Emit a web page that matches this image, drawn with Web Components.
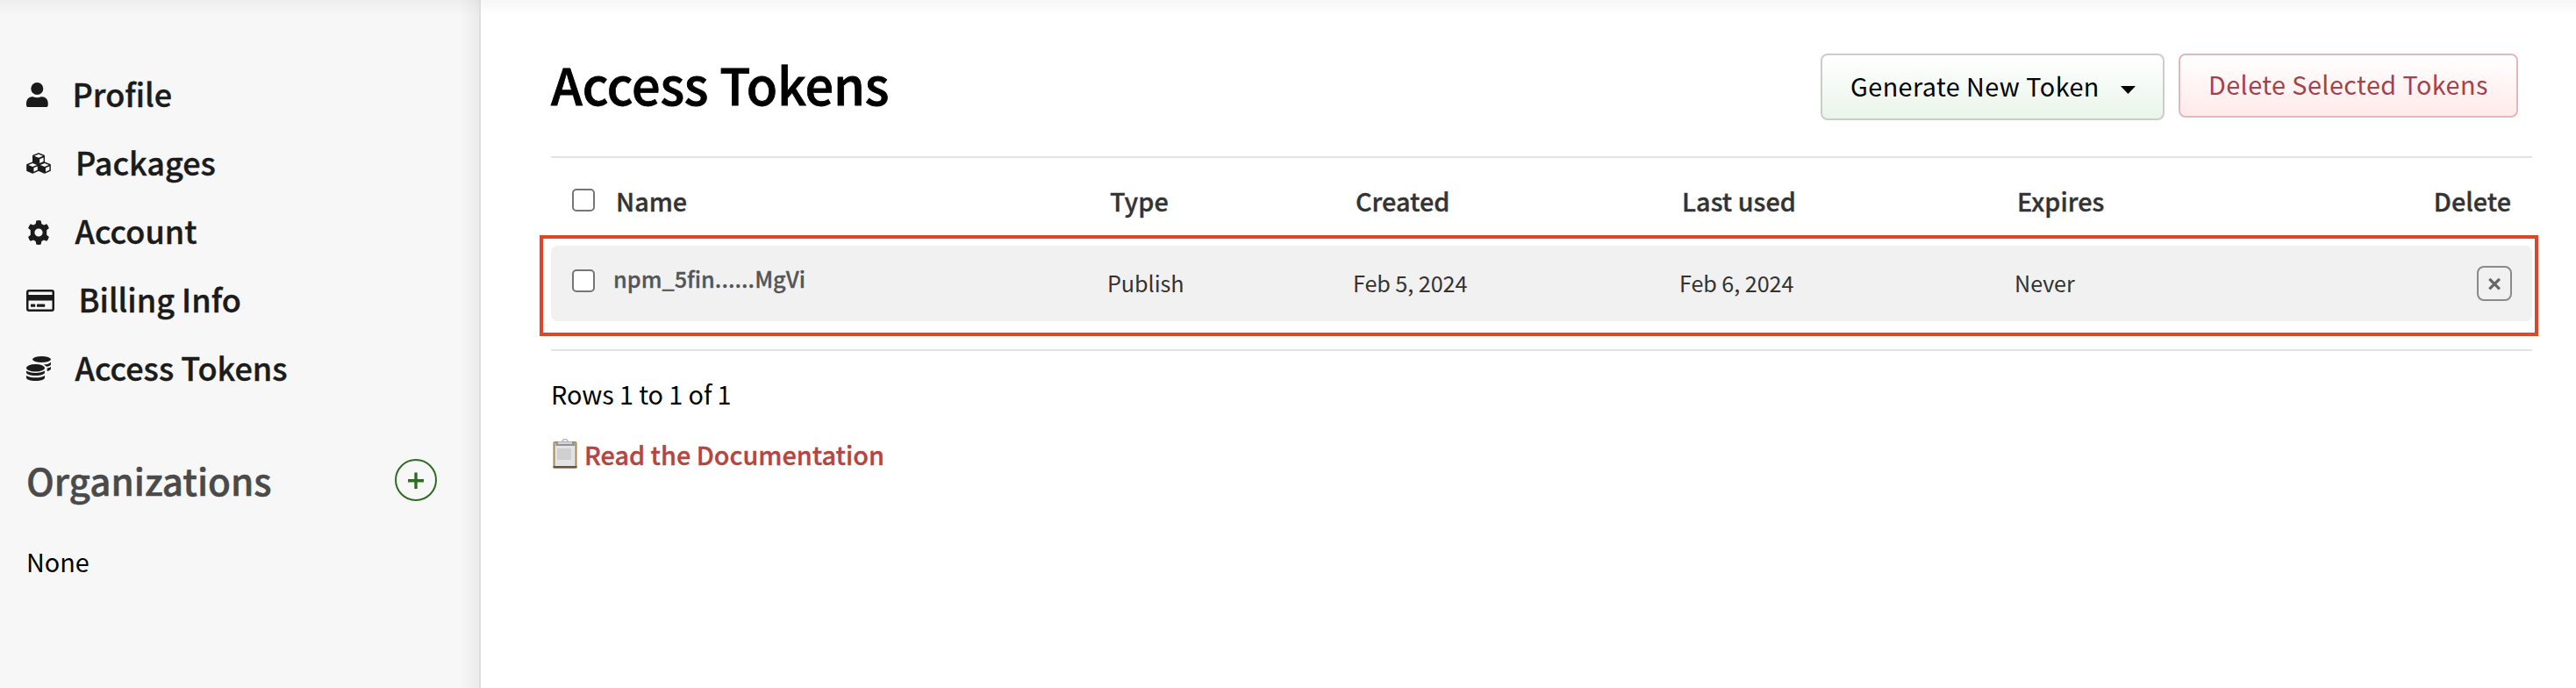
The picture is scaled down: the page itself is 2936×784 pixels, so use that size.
<!DOCTYPE html>
<html lang="en">
<head>
<meta charset="utf-8">
<title>Access Tokens</title>
<style>
html, body { margin: 0; height: 100%; background: #fff; }
body { font-family: "Noto Sans CJK SC", "Noto Sans", sans-serif; overflow: hidden; color: #000; }
</style>
</head>
<body>
<tokens-page></tokens-page>
<script>
const define = (name, html, setup) => customElements.define(name, class extends HTMLElement {
  constructor() {
    super();
    this.attachShadow({ mode: 'open' }).innerHTML = html;
  }
  connectedCallback() { if (setup) setup(this, this.shadowRoot); }
});

const icons = {
  user: [25, 28, '<circle cx="12.3" cy="7" r="7"/><path d="M6.5 16.2h1.2a10.5 10.5 0 0 0 9.200 0h1.200a6.600 6.600 0 0 1 6.600 6.600v2.600a2.600 2.600 0 0 1-2.600 2.600H2.600A2.600 2.600 0 0 1 0 25.400v-2.600a6.600 6.600 0 0 1 6.500-6.600z"/>'],
  cubes: [28, 24, '<g stroke="#1b1b1b" stroke-width="1.400" stroke-linejoin="round"><path d="M14 .9l6.300 2.500v7L14 13.100l-6.300-2.700v-7z"/><path d="M7.200 11.100l6.300 2.500v6.700l-6.300 2.800-6.300-2.800v-6.700z"/><path d="M20.800 11.100l6.300 2.500v6.700l-6.300 2.800-6.300-2.800v-6.700z"/></g><g fill="#f7f7f7"><path d="M14 1.700l5 2L14 5.700 9 3.700zM7.200 11.900l4.900 2-4.900 2-4.900-2zM20.800 11.900l4.900 2-4.900 2-4.900-2zM15.200 7.300l4.400-1.800v4.500l-4.400 1.900zM8.400 17.300l4.400-1.800v4.300l-4.400 2zM22 17.300l4.400-1.800v4.300l-4.400 2z"/></g>'],
  gear: [28, 28, '<path fill-rule="evenodd" d="M11.300.5Q14-.3 16.700.5L17.300 4l2.600 1.500 3.300-1.200q1.900 2 2.700 4.700L23.200 11.300v5.400l2.700 2.300q-.8 2.700-2.700 4.700l-3.300-1.200L17.300 24l-.6 3.500q-2.700.8-5.400 0L10.700 24l-2.600-1.500-3.300 1.200q-1.900-2-2.700-4.700l2.700-2.300v-5.400L2.100 9q.8-2.700 2.700-4.700l3.300 1.200L10.700 4zM14 9.400a4.600 4.600 0 1 0 0 9.200 4.600 4.600 0 1 0 0-9.200z"/>'],
  card: [32, 25, '<path fill-rule="evenodd" d="M3 0h26a3 3 0 0 1 3 3v19a3 3 0 0 1-3 3H3a3 3 0 0 1-3-3V3a3 3 0 0 1 3-3zM3 2.500a.6.6 0 0 0-.5.6V6h27V3.100a.6.6 0 0 0-.5-.6zM2.500 12.500V22q0 .6.5.6h26q.5 0 .5-.6v-9.500z"/><rect x="5" y="16.600" width="5.200" height="3.200" rx=".6"/><rect x="12" y="16.600" width="9.200" height="3.200" rx=".6"/>'],
  coins: [28, 28, '<ellipse cx="17.500" cy="3.500" rx="10.500" ry="3.500"/><path d="M28 6.700v2.200c0 1.300-2 2.400-5 2.900-.8-1-2-1.700-3.400-2.200C23.500 9.300 26.500 8.200 28 6.700zM28 12v2.200c0 1.200-1.700 2.200-4.300 2.800v-3.300c1.800-.4 3.300-1 4.300-1.700z"/><ellipse cx="10.500" cy="13.200" rx="10.500" ry="4.300"/><path d="M0 16.600c2.200 1.500 6 2.400 10.500 2.400s8.300-.9 10.500-2.400v2c0 1.900-4.700 3.500-10.500 3.500S0 20.500 0 18.600zM0 21.900c2.200 1.500 6 2.300 10.500 2.300s8.300-.8 10.500-2.300v2.600c0 1.900-4.700 3.500-10.500 3.500S0 26.400 0 24.500z"/>']
};

define('nav-item', `<style>
  :host { display: flex; height: 78px; box-sizing: border-box; font-size: 36px; line-height: 78px; font-weight: 500; -webkit-text-stroke: .4px; color: #1b1b1b; }
  svg { flex: none; fill: #1b1b1b; }
  span { white-space: nowrap; }
</style><svg></svg><span><slot></slot></span>`, (el, root) => {
  const [w, h, body] = icons[el.getAttribute('icon')];
  const svg = root.querySelector('svg');
  svg.setAttribute('width', w); svg.setAttribute('height', h);
  svg.setAttribute('viewBox', `0 0 ${w} ${h}`);
  svg.innerHTML = body;
  svg.style.marginTop = el.getAttribute('drop') + 'px';
  svg.style.marginRight = el.getAttribute('gap') + 'px';
});

define('side-bar', `<style>
  :host { display: flex; flex-direction: column; flex: none; width: 548px; height: 784px; box-sizing: border-box; padding: 67px 48px 0 30px; background: linear-gradient(rgba(0,0,0,.035), rgba(0,0,0,0) 18px), linear-gradient(to left, rgba(0,0,0,.05), rgba(0,0,0,0) 22px) #f7f7f7; border-right: 2px solid #ddd; }
  .org { display: flex; justify-content: space-between; height: 48px; margin-top: 66px; }
  h2 { margin: -4px 0 0; font-size: 42.200px; line-height: 56px; font-weight: 500; -webkit-text-stroke: .5px; color: #4a4a4a; }
  p { margin: 49px 0 0; font-size: 28.800px; line-height: 40px; }
</style>
<nav>
<nav-item icon="user" drop="27" gap="27.500">Profile</nav-item>
<nav-item icon="cubes" drop="29" gap="28">Packages</nav-item>
<nav-item icon="gear" drop="27.5" gap="27.500">Account</nav-item>
<nav-item icon="card" drop="28.5" gap="27.500">Billing Info</nav-item>
<nav-item icon="coins" drop="27" gap="27.500">Access Tokens</nav-item>
</nav>
<div class="org"><h2>Organizations</h2>
<svg width="48" height="48" fill="none" stroke="#2f6b22"><circle cx="24" cy="24" r="23" stroke-width="2"/><path d="M24 15.500v18.500M15 24.700h18" stroke-width="3.400"/></svg></div>
<p>None</p>`);

define('token-button', `<style>
  :host { display: flex; box-sizing: border-box; align-items: flex-start; border: 2px solid #ccc; border-radius: 8px; font-size: 28.800px; letter-spacing: .42px; line-height: 42px; white-space: nowrap; height: 76px; width: 392px; padding: 14px 0 0 32px; background: linear-gradient(#fff, #e9f5e9); }
  :host([danger]) { height: 73px; width: 387px; padding-left: 32px; padding-top: 12px; color: #a6414a; border-color: #e0b8bf; background: linear-gradient(#fff, #ffeaea); }
</style><slot></slot><slot name="caret"></slot>`);

define('check-box', `<style>
  :host { display: block; flex: none; width: 26px; height: 26px; box-sizing: border-box; border: 2px solid #767676; border-radius: 5px; background: #fff; }
</style>`);

define('token-row', `<style>
  :host { display: grid; grid-template-columns: 24px 47px 563px 280px 372px 382px 200px 1fr; height: 86px; font-size: 25.200px; line-height: 40px; color: #333; }
  :host([head]) { font-size: 28.800px; font-weight: 500; -webkit-text-stroke: .35px; }
</style><span></span><slot></slot>`);

define('tokens-page', `<style>
  :host { display: flex; height: 784px; background: linear-gradient(rgba(0,0,0,.035), rgba(0,0,0,0) 18px) #fff; }
  main { flex: 1; min-width: 0; padding: 61px 50px 0 80px; }
  header { display: flex; height: 117px; }
  h1 { margin: -6px 0 0; font-size: 57.600px; line-height: 80px; font-weight: 500; letter-spacing: -.15px; -webkit-text-stroke: .8px; flex: 1; }
  .gap { width: 16px; }
  .table { border: solid #e3e3e3; border-width: 2px 0; height: 218px; }
  .mark { margin: 0 -7px 0 -13px; height: 115px; box-sizing: border-box; border: 4px solid #e0452a; padding: 8px 3px 0 9px; }
  .row { background: #f1f1f1; border-radius: 7px; }
  .head { height: 88px; }
  .head > token-row > div { padding-top: 29px; padding-left: 3px; }
  .row > token-row > div { padding-top: 22px; letter-spacing: -.08px; }
  .row > token-row > div.name { font-weight: 500; -webkit-text-stroke: .3px; color: #555; padding-top: 17px; letter-spacing: .04px; }
  .x { width: 40px; height: 40px; box-sizing: border-box; margin: 23px 23px 0 auto; }
  footer p { margin: 29px 0 0; font-size: 28.800px; line-height: 40px; letter-spacing: -.08px; }
  a { display: flex; margin-top: 29px; color: #b5453f; font-weight: 500; -webkit-text-stroke: .35px; font-size: 28.800px; line-height: 40px; }
</style>
<side-bar></side-bar>
<main>
<header><h1>Access Tokens</h1>
<token-button>Generate New Token<svg slot="caret" width="17" height="9" style="margin:21px 0 0 24px"><path d="M0 0h17L8.500 9z"/></svg></token-button>
<div class="gap"></div>
<token-button danger>Delete Selected Tokens</token-button><div class="gap"></div></header>
<div class="table">
<div class="head"><token-row head><check-box style="margin-top:35px"></check-box><div>Name</div><div>Type</div><div>Created</div><div>Last used</div><div>Expires</div><div style="text-align:right;padding-right:24px">Delete</div></token-row></div>
<div class="mark"><div class="row"><token-row><check-box style="margin-top:27px"></check-box><div class="name">npm_5fin......MgVi</div><div>Publish</div><div>Feb 5, 2024</div><div>Feb 6, 2024</div><div>Never</div>
<svg class="x" viewBox="0 0 40 40" fill="none"><rect x="1" y="1" width="38" height="38" rx="7" stroke="#8a8a8a" stroke-width="2"/><path d="M14.300 14.800l11.600 11.600M25.900 14.800l-11.600 11.600" stroke="#666" stroke-width="3.200"/></svg></token-row></div></div>
</div>
<footer><p>Rows 1 to 1 of 1</p>
<a><svg width="30" height="34" style="margin:2px 7px 0 1px" viewBox="0 0 30 34"><rect x="1.500" y="3" width="27" height="30.500" rx="2" fill="#a98a55"/><rect x="1.500" y="31" width="27" height="2.500" fill="#6b5238"/><rect x="3.500" y="5" width="23" height="26" fill="#e3e3e3"/><rect x="6" y="11" width="16" height="13" fill="#cfcfcf"/><path d="M5 4h20l2 4H4z" fill="#8f959b"/><path d="M7 3.500h16v2.500H7z" fill="#d2d6da"/><path d="M12 3a3 2.500 0 0 1 6 0" fill="none" stroke="#b5babf" stroke-width="1.500"/></svg>Read the Documentation</a></footer>
</main>`);
</script>
</body>
</html>
